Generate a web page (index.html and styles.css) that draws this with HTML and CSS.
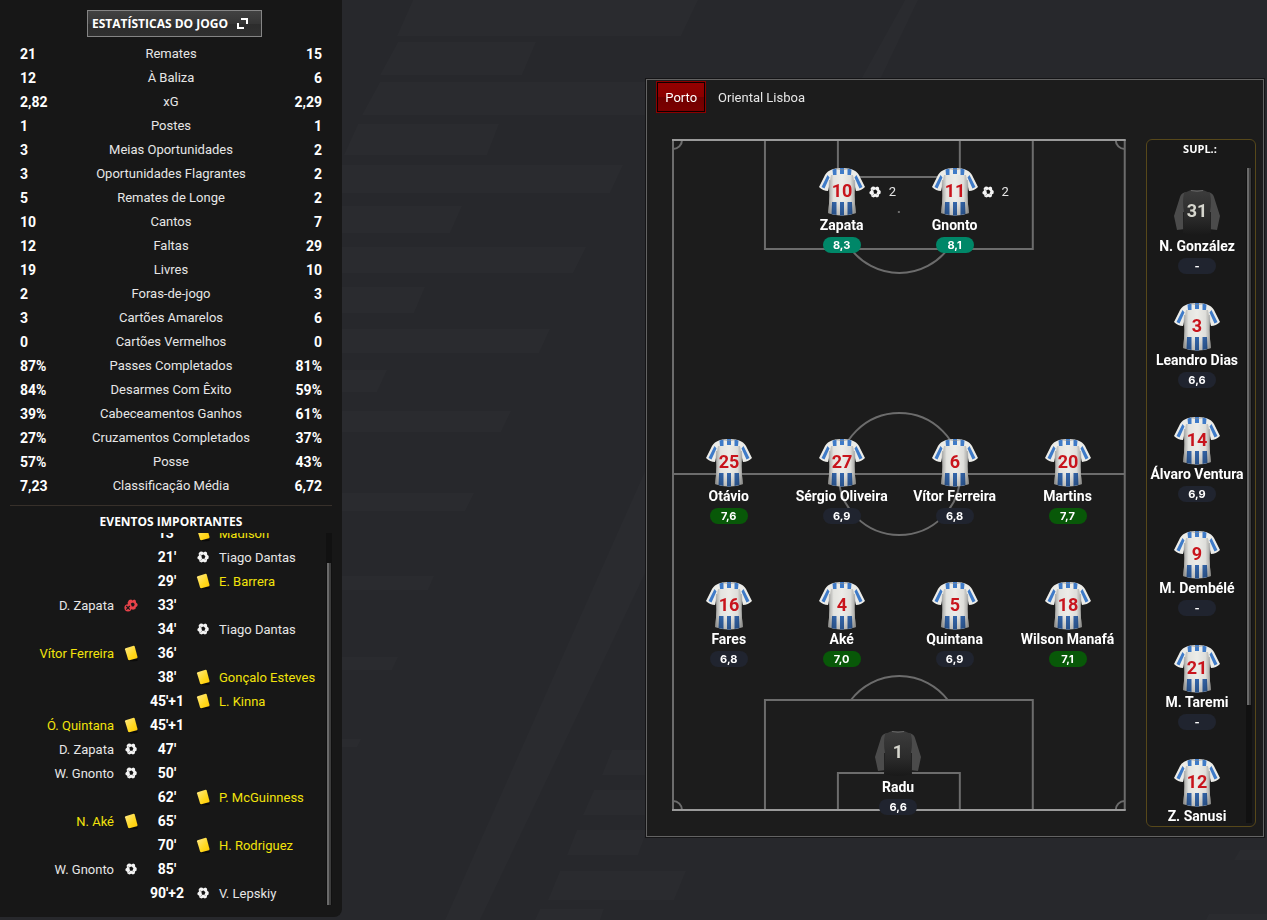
FILE: index.html
```html
<!DOCTYPE html>
<html lang="pt">
<head>
  <meta charset="UTF-8">
  <meta name="viewport" content="width=device-width, initial-scale=1.0">
  <title>Estatísticas do jogo</title>
  <link rel="stylesheet" href="styles.css">
</head>
<body>
  <!-- shared shapes -->
  <svg class="defs" aria-hidden="true">
    <defs>
      <linearGradient id="cloth" x1="0" x2="1" y1="0" y2="0">
        <stop offset="0" stop-color="#000" stop-opacity=".35"/>
        <stop offset=".2" stop-color="#000" stop-opacity=".04"/>
        <stop offset=".5" stop-color="#000" stop-opacity="0"/>
        <stop offset=".8" stop-color="#000" stop-opacity=".06"/>
        <stop offset="1" stop-color="#000" stop-opacity=".35"/>
      </linearGradient>
      <linearGradient id="fall" x1="0" x2="0" y1="0" y2="1">
        <stop offset=".5" stop-color="#000" stop-opacity="0"/>
        <stop offset="1" stop-color="#000" stop-opacity=".2"/>
      </linearGradient>
      <linearGradient id="keeper" x1="0" x2="0" y1="0" y2="1">
        <stop offset="0" stop-color="#3c3c3c"/>
        <stop offset=".6" stop-color="#2b2b2b"/>
        <stop offset="1" stop-color="#191919"/>
      </linearGradient>
      <linearGradient id="gold" x1="0" x2="1" y1="0" y2="1">
        <stop offset="0" stop-color="#ffe98a"/>
        <stop offset=".6" stop-color="#ffd820"/>
        <stop offset="1" stop-color="#ffc800"/>
      </linearGradient>
    </defs>
    <symbol id="shirt" viewBox="0 0 46 50">
      <path fill="#ecece8" d="M14 2Q23 0 32 2Q38 4 40 8L46 20Q42 24 37 24L36 20Q35 32 37 46Q23 51 9 46Q11 32 10 20L9 24Q4 24 0 20L6 8Q8 4 14 2Z"/>
      <g fill="#3f7bc8">
        <path d="M13.500 2.500L17.500 1.500V8H14ZM21 1H25V7H21ZM28.500 1.500L32.500 2.500L32 8H28.500Z"/>
        <path d="M8.500 8L10.500 10.500L5.500 21.500L2.500 20ZM37.500 8L35.500 10.500L40.500 21.500L43.500 20Z"/>
      </g>
      <path fill="#3467ad" d="M13 35H17.500V48L12.500 47ZM21 35H25V48.500H21ZM28.500 35H33L33.500 47L28.500 48Z"/>
      <path fill="url(#cloth)" d="M10 20Q11 32 9 46Q23 51 37 46Q35 32 36 20L34 8H12Z"/>
      <path fill="url(#fall)" d="M10 20Q11 32 9 46Q23 51 37 46Q35 32 36 20Z"/>
      <path fill="none" stroke="#8b8e92" stroke-width=".6" d="M16 1.500Q23 4 30 1.500M10.500 13L10 23M35.500 13L36 23"/>
    </symbol>
    <symbol id="shirt-gk" viewBox="0 0 46 50">
      <path fill="#4b4b4b" d="M12 4Q7 5 6 9L0 28L3 42L11 41V6ZM34 4Q39 5 40 9L46 28L43 42L35 41V6Z"/>
      <path fill="url(#keeper)" d="M17 2H29L36 5Q38 14 36 24L37 45Q23 49 9 45L10 24Q8 14 10 5Z"/>
      <path fill="none" stroke="#666" stroke-width="1" d="M17 2.500Q23 4 29 2.500"/>
      <path fill="none" stroke="#222" stroke-width="1" d="M9.500 24V41M36.500 24V41"/>
    </symbol>
    <symbol id="ball" viewBox="0 0 12 12">
      <path fill="#f4f4f4" d="M3 .8L5 .6L6.400 1.600L8.200 .5L10 1.600L10.200 3.800L11.700 5L11.600 7.400L10 8.600L9.800 10.400L8 11.500L6.200 10.800L4.400 11.600L2.400 10.600L2.200 8.800L.6 7.800L.4 6L2 4.600L1.600 2.600Z"/>
      <path fill="#151515" d="M4.300 4.200L6.600 3.600L8.400 5.200L7.500 7.700L5 7.800Z"/>
      <path stroke="#8a8a8a" stroke-width=".7" d="M5 7.800L3.600 9.600M7.500 7.700L8.600 9M4.300 4.200L2.800 3.600"/>
    </symbol>
    <symbol id="missed" viewBox="0 0 14 13">
      <path fill="#e8434a" d="M5 1L7.200 .6L8.400 1.400L10.200 .4L11.800 1.600L12 3.600L13.600 5L13.400 7L11.800 8.200L11.400 10L9 10.800L7 10L4 6L3.600 3.600Z"/>
      <path fill="#171717" d="M6.800 4.400L9 3.600L10.700 5L10 7.200L7.800 7.400Z"/>
      <circle cx="4" cy="8.800" r="3.600" fill="#e8434a"/>
      <path stroke="#171717" stroke-width="1.200" fill="none" d="M2.300 7L5.800 10.600M5.800 7L2.300 10.600"/>
    </symbol>
    <symbol id="card" viewBox="0 0 16 17">
      <ellipse cx="10" cy="15" rx="5" ry="1.200" fill="#0b0b0b"/>
      <path fill="url(#gold)" d="M2.500 3.200L10.600 .8Q11.400 .7 11.700 1.500L14.500 12Q14.600 12.900 13.800 13.200L6.300 15.200Q5.400 15.300 5.100 14.500L2 4.200Q1.900 3.500 2.500 3.200Z"/>
    </symbol>
  </svg>

  <!-- faded stripes behind everything -->
  <svg class="backdrop" viewBox="0 0 1267 920" preserveAspectRatio="none" aria-hidden="true">
    <path d="M413 0H698L681 36H397ZM398 42H536L522 75H380ZM380 82H700V115H362ZM358 124H499L487 155H344ZM330 165H623L610 193H330ZM330 206H462L450 233H330ZM330 247H586L573 273H330ZM330 287H425L414 313H330ZM330 329H550L539 353H330ZM330 370H387L377 392H330ZM330 411H511L501 432H330ZM330 493H474L465 511H330ZM330 576H434L428 590H330ZM330 657H398L392 670H330ZM330 739H361L357 747H330Z"/>
    <path d="M905 0H918L480 920H445L650 460Z"/>
    <path d="M612 750H647V775H602ZM594 790H647V815H583ZM577 830H647L638 855H567ZM560 871H686L674 900H548ZM540 909H604L600 920H535ZM1240 850H1267V860H1234ZM1209 914H1267V920H1206Z"/>
  </svg>

  <div class="layout">
    <aside class="sidebar">
      <div class="sidebar-head">
        <button class="stats-button" type="button">Estatísticas do jogo
          <svg width="11" height="11" viewBox="0 0 11 11" aria-hidden="true"><path fill="none" stroke="#fff" stroke-width="2" d="M4 1H10V6M1 5V10H7"/></svg>
        </button>
      </div>

      <table class="stats">
        <tr><td>21</td><th scope="row">Remates</th><td>15</td></tr>
        <tr><td>12</td><th scope="row">À Baliza</th><td>6</td></tr>
        <tr><td>2,82</td><th scope="row">xG</th><td>2,29</td></tr>
        <tr><td>1</td><th scope="row">Postes</th><td>1</td></tr>
        <tr><td>3</td><th scope="row">Meias Oportunidades</th><td>2</td></tr>
        <tr><td>3</td><th scope="row">Oportunidades Flagrantes</th><td>2</td></tr>
        <tr><td>5</td><th scope="row">Remates de Longe</th><td>2</td></tr>
        <tr><td>10</td><th scope="row">Cantos</th><td>7</td></tr>
        <tr><td>12</td><th scope="row">Faltas</th><td>29</td></tr>
        <tr><td>19</td><th scope="row">Livres</th><td>10</td></tr>
        <tr><td>2</td><th scope="row">Foras-de-jogo</th><td>3</td></tr>
        <tr><td>3</td><th scope="row">Cartões Amarelos</th><td>6</td></tr>
        <tr><td>0</td><th scope="row">Cartões Vermelhos</th><td>0</td></tr>
        <tr><td>87%</td><th scope="row">Passes Completados</th><td>81%</td></tr>
        <tr><td>84%</td><th scope="row">Desarmes Com Êxito</th><td>59%</td></tr>
        <tr><td>39%</td><th scope="row">Cabeceamentos Ganhos</th><td>61%</td></tr>
        <tr><td>27%</td><th scope="row">Cruzamentos Completados</th><td>37%</td></tr>
        <tr><td>57%</td><th scope="row">Posse</th><td>43%</td></tr>
        <tr><td>7,23</td><th scope="row">Classificação Média</th><td>6,72</td></tr>
      </table>

      <section class="events">
        <h2>Eventos importantes</h2>
        <div class="events-body">
          <ul class="event-list">
            <li class="away booked"><b>13'</b><svg class="card"><use href="#card"/></svg><span>Madison</span></li>
            <li class="away"><b>21'</b><svg class="ball"><use href="#ball"/></svg><span>Tiago Dantas</span></li>
            <li class="away booked"><b>29'</b><svg class="card"><use href="#card"/></svg><span>E. Barrera</span></li>
            <li class="home"><span>D. Zapata</span><svg class="missed"><use href="#missed"/></svg><b>33'</b></li>
            <li class="away"><b>34'</b><svg class="ball"><use href="#ball"/></svg><span>Tiago Dantas</span></li>
            <li class="home booked"><span>Vítor Ferreira</span><svg class="card"><use href="#card"/></svg><b>36'</b></li>
            <li class="away booked"><b>38'</b><svg class="card"><use href="#card"/></svg><span>Gonçalo Esteves</span></li>
            <li class="away booked"><b>45'+1</b><svg class="card"><use href="#card"/></svg><span>L. Kinna</span></li>
            <li class="home booked"><span>Ó. Quintana</span><svg class="card"><use href="#card"/></svg><b>45'+1</b></li>
            <li class="home"><span>D. Zapata</span><svg class="ball"><use href="#ball"/></svg><b>47'</b></li>
            <li class="home"><span>W. Gnonto</span><svg class="ball"><use href="#ball"/></svg><b>50'</b></li>
            <li class="away booked"><b>62'</b><svg class="card"><use href="#card"/></svg><span>P. McGuinness</span></li>
            <li class="home booked"><span>N. Aké</span><svg class="card"><use href="#card"/></svg><b>65'</b></li>
            <li class="away booked"><b>70'</b><svg class="card"><use href="#card"/></svg><span>H. Rodriguez</span></li>
            <li class="home"><span>W. Gnonto</span><svg class="ball"><use href="#ball"/></svg><b>85'</b></li>
            <li class="away"><b>90'+2</b><svg class="ball"><use href="#ball"/></svg><span>V. Lepskiy</span></li>
          </ul>
          <div class="track track-end"><div class="thumb"></div></div>
        </div>
      </section>
    </aside>

    <main class="main">
      <section class="panel">
        <nav class="tabs">
          <button class="tab active" type="button">Porto</button>
          <button class="tab" type="button">Oriental Lisboa</button>
        </nav>

        <div class="squad">
          <div class="pitch">
            <svg class="lines" viewBox="0 0 454 672" preserveAspectRatio="none" aria-hidden="true">
              <g fill="none" stroke="#6c6c6c" stroke-width="2">
                <path d="M1 1V671M453 1V671M1 335H453"/>
                <path d="M93 1V110H361V1M166 1V38H288V1M179 110A61 61 0 0 0 276 110"/>
                <path d="M93 671V561H361V671M166 671V634H288V671M179 561A61 61 0 0 1 276 561"/>
                <circle cx="227.500" cy="335" r="61"/>
                <path d="M10 1A9 9 0 0 1 1 10M444 1A9 9 0 0 0 453 10M10 671A9 9 0 0 0 1 662M444 671A9 9 0 0 1 453 662"/>
              </g>
              <path fill="none" stroke="#9a9a9a" stroke-width="2" d="M0 1H454M0 671H454"/>
              <path fill="#6c6c6c" d="M226 72H228V74H226ZM226 334H228V336H226Z"/>
            </svg>

            <div class="line">
              <div class="player">
                <svg class="kit" viewBox="0 0 46 50"><use href="#shirt"/><text x="23" y="30">10</text></svg>
                <strong>Zapata</strong><span class="rating great">8,3</span>
                <span class="goals"><svg class="ball"><use href="#ball"/></svg>2</span>
              </div>
              <div class="player">
                <svg class="kit" viewBox="0 0 46 50"><use href="#shirt"/><text x="23" y="30">11</text></svg>
                <strong>Gnonto</strong><span class="rating great">8,1</span>
                <span class="goals"><svg class="ball"><use href="#ball"/></svg>2</span>
              </div>
            </div>

            <div class="line">
              <div class="player">
                <svg class="kit" viewBox="0 0 46 50"><use href="#shirt"/><text x="23" y="30">25</text></svg>
                <strong>Otávio</strong><span class="rating good">7,6</span>
              </div>
              <div class="player">
                <svg class="kit" viewBox="0 0 46 50"><use href="#shirt"/><text x="23" y="30">27</text></svg>
                <strong>Sérgio Oliveira</strong><span class="rating">6,9</span>
              </div>
              <div class="player">
                <svg class="kit" viewBox="0 0 46 50"><use href="#shirt"/><text x="23" y="30">6</text></svg>
                <strong>Vítor Ferreira</strong><span class="rating">6,8</span>
              </div>
              <div class="player">
                <svg class="kit" viewBox="0 0 46 50"><use href="#shirt"/><text x="23" y="30">20</text></svg>
                <strong>Martins</strong><span class="rating good">7,7</span>
              </div>
            </div>

            <div class="line">
              <div class="player">
                <svg class="kit" viewBox="0 0 46 50"><use href="#shirt"/><text x="23" y="30">16</text></svg>
                <strong>Fares</strong><span class="rating">6,8</span>
              </div>
              <div class="player">
                <svg class="kit" viewBox="0 0 46 50"><use href="#shirt"/><text x="23" y="30">4</text></svg>
                <strong>Aké</strong><span class="rating good">7,0</span>
              </div>
              <div class="player">
                <svg class="kit" viewBox="0 0 46 50"><use href="#shirt"/><text x="23" y="30">5</text></svg>
                <strong>Quintana</strong><span class="rating">6,9</span>
              </div>
              <div class="player">
                <svg class="kit" viewBox="0 0 46 50"><use href="#shirt"/><text x="23" y="30">18</text></svg>
                <strong>Wilson Manafá</strong><span class="rating good">7,1</span>
              </div>
            </div>

            <div class="line">
              <div class="player">
                <svg class="kit gk" viewBox="0 0 46 50"><use href="#shirt-gk"/><text x="23" y="29">1</text></svg>
                <strong>Radu</strong><span class="rating">6,6</span>
              </div>
            </div>
          </div>

          <div class="bench">
            <h2>Supl.:</h2>
            <div class="bench-body">
              <div class="bench-list">
                <div class="player">
                  <svg class="kit gk" viewBox="0 0 46 50"><use href="#shirt-gk"/><text x="23" y="29">31</text></svg>
                  <strong>N. González</strong><span class="rating">-</span>
                </div>
                <div class="player">
                  <svg class="kit" viewBox="0 0 46 50"><use href="#shirt"/><text x="23" y="30">3</text></svg>
                  <strong>Leandro Dias</strong><span class="rating">6,6</span>
                </div>
                <div class="player">
                  <svg class="kit" viewBox="0 0 46 50"><use href="#shirt"/><text x="23" y="30">14</text></svg>
                  <strong>Álvaro Ventura</strong><span class="rating">6,9</span>
                </div>
                <div class="player">
                  <svg class="kit" viewBox="0 0 46 50"><use href="#shirt"/><text x="23" y="30">9</text></svg>
                  <strong>M. Dembélé</strong><span class="rating">-</span>
                </div>
                <div class="player">
                  <svg class="kit" viewBox="0 0 46 50"><use href="#shirt"/><text x="23" y="30">21</text></svg>
                  <strong>M. Taremi</strong><span class="rating">-</span>
                </div>
                <div class="player">
                  <svg class="kit" viewBox="0 0 46 50"><use href="#shirt"/><text x="23" y="30">12</text></svg>
                  <strong>Z. Sanusi</strong>
                </div>
              </div>
              <div class="track track-start"><div class="thumb"></div></div>
            </div>
          </div>
        </div>
      </section>
    </main>
  </div>
</body>
</html>
```
FILE: styles.css
```css
:root {
  --bg: #27282c;
  --side: #171717;
  --panel: #1c1c1c;
  --text: #e6e6e6;
  --yellow: #f2e30c;
}

* {
  box-sizing: border-box;
}

body {
  margin: 0;
  background: var(--bg);
  color: var(--text);
  font-family: Roboto, sans-serif;
  font-size: 13px;
}

h2 {
  margin: 0;
  color: #fff;
  font-family: "Open Sans", sans-serif;
  font-size: 12px;
  font-weight: 700;
  line-height: 16px;
  text-align: center;
  text-transform: uppercase;
}

button {
  font: inherit;
  color: inherit;
  cursor: pointer;
}

.defs {
  position: absolute;
  width: 0;
  height: 0;
}

.backdrop {
  position: fixed;
  inset: 0;
  width: 100%;
  height: 100%;
  z-index: -1;
  fill: #fff;
  fill-opacity: 0.014;
}

.layout {
  display: grid;
  grid-template-columns: 342px 1fr;
  height: 100vh;
}

/* left column */
.sidebar {
  display: flex;
  flex-direction: column;
  min-height: 0;
  margin-bottom: 3px;
  padding: 10px 10px 12px;
  background: var(--side);
  border-radius: 0 0 8px 0;
}

.sidebar-head {
  display: flex;
  justify-content: center;
  padding-left: 7px;
  margin-bottom: 5px;
}

.stats-button {
  display: flex;
  align-items: center;
  gap: 9px;
  height: 27px;
  padding: 0 13px 0 4px;
  border: 1px solid #858585;
  background: linear-gradient(#424242, #353535 50%, #2c2c2c 50%, #303030);
  color: #fff;
  font-family: "Open Sans", sans-serif;
  font-size: 12px;
  font-weight: 700;
  text-transform: uppercase;
}

.stats {
  border-collapse: collapse;
  table-layout: fixed;
  margin: 0 10px;
}

.stats td,
.stats th {
  height: 24px;
  padding: 0;
  line-height: 24px;
}

.stats th {
  width: 60%;
  font-weight: 400;
}

.stats td {
  color: #fff;
  font-size: 14px;
  font-weight: 700;
}

.stats td:last-child {
  text-align: right;
}

.events {
  display: flex;
  flex: 1;
  flex-direction: column;
  min-height: 0;
  margin-top: 7px;
  padding-top: 8px;
  border-top: 1px solid #37302a;
}

.events-body {
  display: flex;
  flex: 1;
  gap: 3px;
  min-height: 0;
  margin-top: 3px;
}

.event-list {
  display: flex;
  flex: 1;
  flex-direction: column;
  justify-content: flex-end;
  margin: 0;
  padding: 0;
  overflow: hidden;
  list-style: none;
}

.event-list li {
  display: grid;
  grid-template-columns: 1fr 34px 38px 33px 1fr;
  flex: none;
  align-items: center;
  justify-items: center;
  height: 24px;
}

.event-list b {
  grid-column: 3;
  color: #fff;
  font-size: 14px;
  white-space: nowrap;
}

.event-list span {
  white-space: nowrap;
}

.home span {
  justify-self: end;
}

.away span {
  justify-self: start;
}

.booked span {
  color: var(--yellow);
}

.card {
  width: 16px;
  height: 17px;
}

.ball {
  width: 12px;
  height: 12px;
}

.missed {
  width: 14px;
  height: 13px;
}

/* scrollbars */
.track {
  display: flex;
  flex-direction: column;
  width: 6px;
  background: #111;
}

.track-end {
  justify-content: flex-end;
}

.thumb {
  width: 4px;
  margin: 0 1px;
  background: linear-gradient(90deg, #6a6a6a 50%, #3c3c3c 50%);
}

.track-end .thumb {
  height: 92%;
}

.track-start .thumb {
  height: 82%;
}

/* team panel */
.main {
  padding: 79px 3px 0 0;
}

.panel {
  width: 67%;
  margin-left: auto;
  padding: 1px 0 9px;
  border: 1px solid #636363;
  background: var(--panel);
  box-shadow: 0 0 0 1px #151517;
}

.tabs {
  display: flex;
  gap: 3px;
  padding: 0 9px;
}

.tab {
  height: 32px;
  padding: 0 8px;
  border: 1px solid transparent;
  background: none;
}

.tab.active {
  border-color: #8c0000;
  background: linear-gradient(#960000, #8a0000 50%, #700000 50%, #7c0000);
  box-shadow: inset 0 0 0 1px #0d0000;
  color: #fff;
}

.squad {
  display: grid;
  grid-template-columns: 1fr 110px;
  gap: 20px;
  margin-top: 26px;
  padding: 0 7px 0 25px;
}

.pitch {
  position: relative;
  display: grid;
  grid-template-rows: 271px 143px 148px 82px;
  margin-bottom: 16px;
  padding: 28px 2px 0 0;
}

.lines {
  position: absolute;
  inset: 0;
  width: 100%;
  height: 100%;
}

.line {
  display: flex;
  justify-content: center;
}

.line .player {
  width: 25%;
}

.player {
  position: relative;
  display: flex;
  flex-direction: column;
  align-items: center;
}

.player strong {
  color: #fff;
  font-size: 14px;
  line-height: 16px;
  white-space: nowrap;
}

.kit {
  flex: none;
  width: 46px;
  height: 50px;
}

.kit text {
  fill: #c8141c;
  font-family: Roboto, sans-serif;
  font-size: 18px;
  font-weight: 700;
  text-anchor: middle;
}

.kit.gk text {
  fill: #d6d6ce;
}

.rating {
  flex: none;
  width: 38px;
  height: 16px;
  margin-top: 4px;
  border-radius: 8px;
  background: #20242f;
  color: #fff;
  font-family: Inter, sans-serif;
  font-size: 11px;
  font-weight: 700;
  line-height: 16px;
  text-align: center;
}

.rating.good {
  background: #085808;
}

.rating.great {
  background: #008768;
}

.goals {
  position: absolute;
  top: 17px;
  left: calc(50% + 27px);
  display: flex;
  align-items: center;
  gap: 8px;
  line-height: 16px;
}

/* substitutes */
.bench {
  display: flex;
  flex-direction: column;
  padding: 1px 3px 3px 1px;
  border: 1px solid #57481a;
  border-radius: 6px;
  background: #191919;
}

.bench h2 {
  font-size: 11px;
}

.bench-body {
  display: flex;
  flex: 1;
  margin-top: 11px;
  contain: size;
}

.bench-list {
  display: flex;
  flex: 1;
  flex-direction: column;
  overflow: hidden;
}

.bench-list .player {
  flex: none;
  height: 114px;
  padding-top: 20px;
}
```
